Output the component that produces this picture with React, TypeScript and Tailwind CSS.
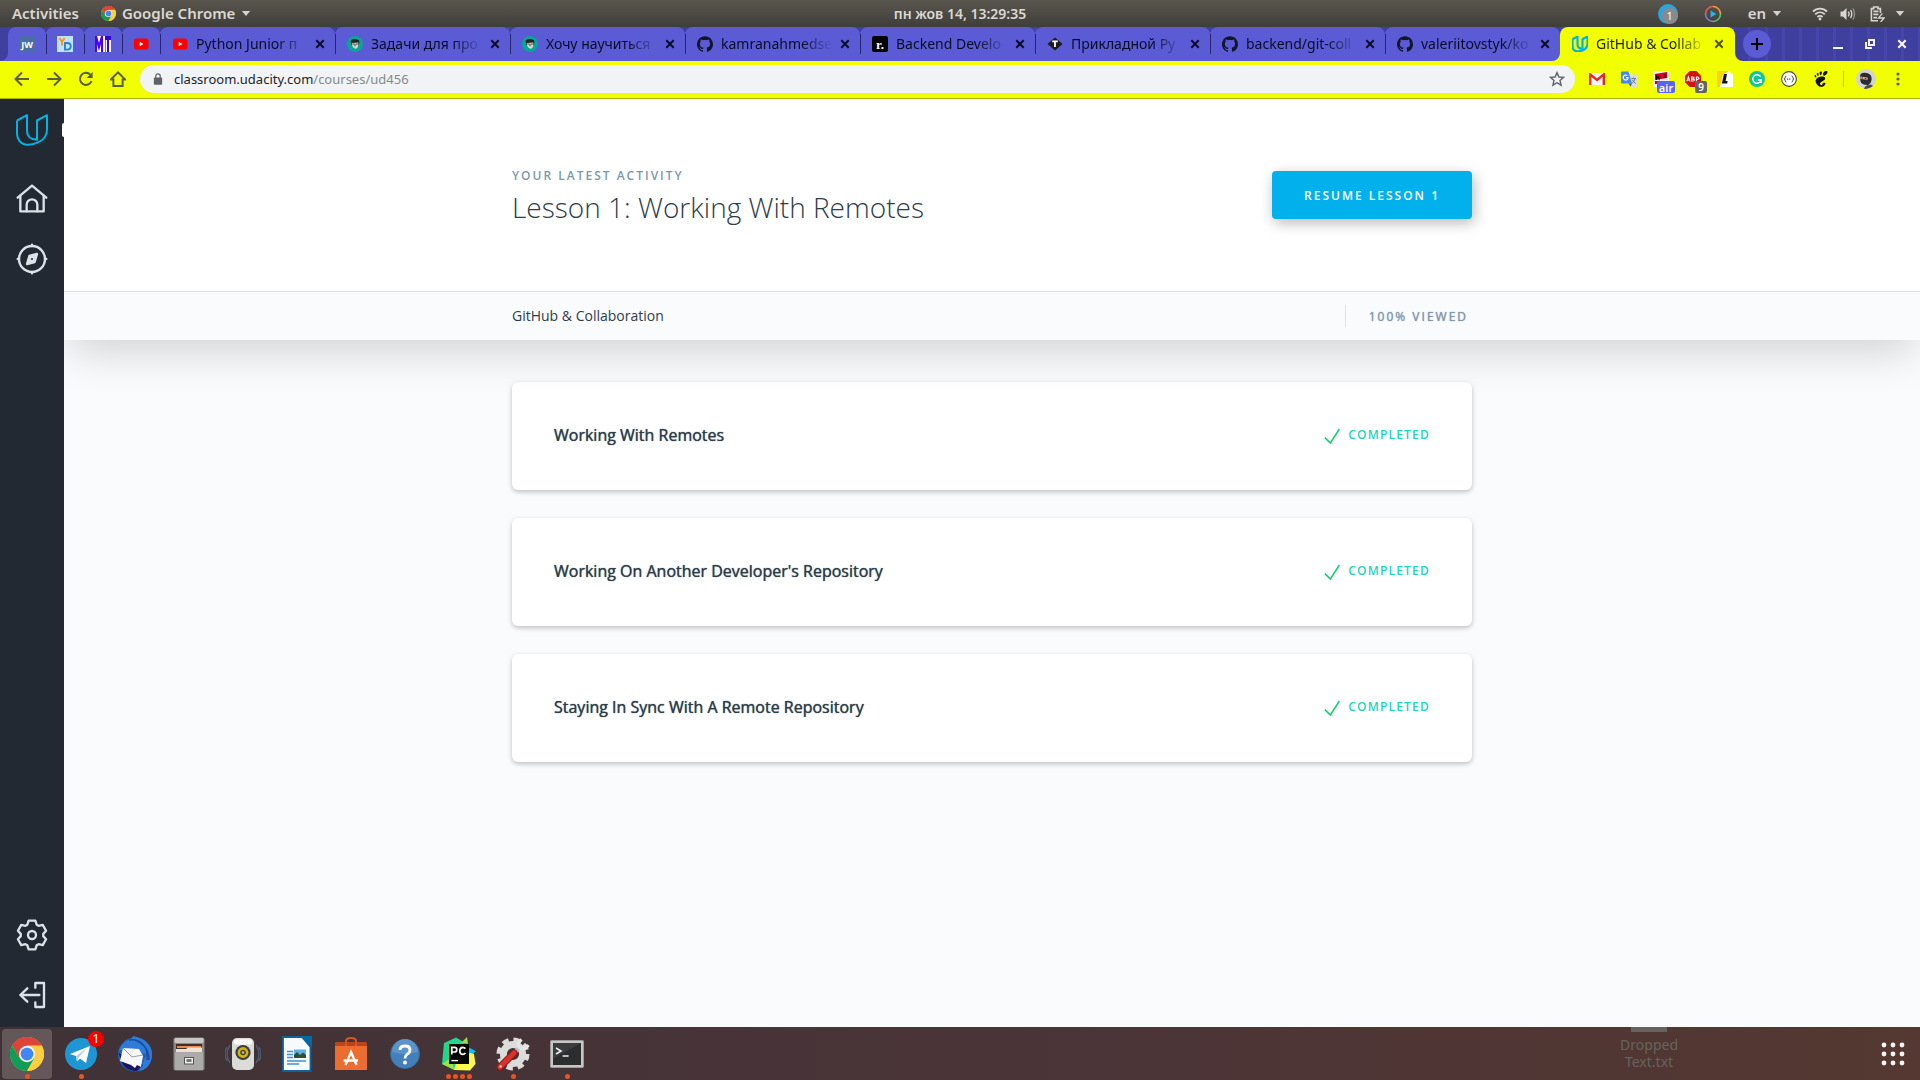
import type { ReactNode } from "react";
import { SiGithub, SiGnome } from "react-icons/si";

const UI = "font-['Noto_Sans',sans-serif]";

function ChromeLogo({ className }: { className: string }) {
  return (
    <svg viewBox="0 0 48 48" className={className} aria-hidden="true">
      <circle cx="24" cy="24" r="24" fill="#ffcd40" />
      <path d="M24 24 L3.2 12 A24 24 0 0 1 44.8 12 Z" fill="#db4437" />
      <path d="M24 12 H44.8 A24 24 0 0 0 3.2 12 L13.6 30 Z" fill="#db4437" />
      <path d="M3.2 12 A24 24 0 0 0 24 48 L34.4 30 H13.6 Z" fill="#0f9d58" />
      <path d="M24 48 A24 24 0 0 0 44.8 12 H24 L34.4 30 Z" fill="#ffcd40" />
      <circle cx="24" cy="24" r="11.5" fill="#f1f1f1" />
      <circle cx="24" cy="24" r="9" fill="#4285f4" />
    </svg>
  );
}

function UdacityMark({ className, stroke, width }: { className: string; stroke: string; width: number }) {
  return (
    <svg viewBox="47 74 96 95" className={className} fill="none" stroke={stroke} strokeWidth={width} strokeLinejoin="round" aria-hidden="true">
      <path d="M50 93 L80 77 V122 C80 141 92 150 108 150" />
      <path d="M50 93 V130 C50 153 64 166 84 166 C118 162 140 146 140 120 V77 L110 93 V154" />
    </svg>
  );
}

function Youtube() {
  return (
    <svg viewBox="0 0 16 16" className="size-4" aria-hidden="true">
      <rect x="1" y="2.5" width="14.5" height="11" rx="2.5" fill="#f00" />
      <path d="M6.7 5.8 L10.4 8 L6.7 10.2 Z" fill="#fff" />
    </svg>
  );
}

function FaceIcon() {
  return (
    <svg viewBox="0 0 16 16" className="size-4" aria-hidden="true">
      <circle cx="8" cy="8" r="8" fill="#06a79b" />
      <path d="M3.6 5 C4.5 2.6 10.5 2.4 12 4.6 C12.8 7 12 8 12 9 H4.4 Z" fill="#232323" />
      <path d="M4.8 7 L11.4 6.6 C11.6 10.5 10.6 12.6 8.8 12.8 C6.4 12.6 5 10.6 4.8 7 Z" fill="#d8d2cc" />
      <path d="M5.4 8 H7.4 M8.8 8 H10.8 M8 8 V10.2" stroke="#333" strokeWidth="0.9" />
    </svg>
  );
}

function JwIcon() {
  return <span className="flex size-4 items-center justify-center bg-[#4a6da7] font-['Open_Sans',sans-serif] text-[9px] font-bold leading-none text-white">JW</span>;
}

function YdIcon() {
  return (
    <svg viewBox="0 0 16 16" className="size-4" aria-hidden="true">
      <rect width="16" height="16" fill="#bfe3fa" />
      <path d="M2.5 2 L5 6 L7.6 2 M5 6 V9.4" stroke="#f59a16" strokeWidth="2" fill="none" />
      <path d="M8 7 H10 C15 7 15 13.6 10 13.6 H8 Z" stroke="#2a7fd0" strokeWidth="1.9" fill="none" />
    </svg>
  );
}

function StripesIcon() {
  return (
    <svg viewBox="0 0 16 16" className="size-4" aria-hidden="true">
      <rect width="16" height="16" fill="#fff" />
      <path d="M0 0 H2 L4 7 L6 0 H8 V16 H6 V8 L4 15 L2 8 V16 H0 Z" fill="#4a00ff" />
      <path d="M8 0 H16 V4 H14 V16 H12 V4 H10.6 V16 H10 V0 Z" fill="#3a00e0" />
      <path d="M8.6 0 H10 V16 H8.6 Z" fill="#fff" />
    </svg>
  );
}

function RoadmapIcon() {
  return <span className="flex size-4 items-center justify-center rounded-xs bg-black font-['Liberation_Serif',serif] text-[13px] font-bold leading-none text-white">r.</span>;
}

function DiamondIcon() {
  return (
    <svg viewBox="0 0 16 16" className="size-4" aria-hidden="true">
      <path d="M8 1.5 L15.5 8 L8 14.5 L0.5 8 Z" fill="#1c1c1c" />
      <path d="M5.2 5.4 H10.8 M8 5 V11" stroke="#fff" strokeWidth="1.8" />
    </svg>
  );
}

function Github() {
  return <SiGithub className="size-4 text-[#14142c]" aria-hidden="true" />;
}

function Cross({ className, width = 2 }: { className: string; width?: number }) {
  return (
    <svg viewBox="0 0 10 10" className={className} fill="none" stroke="currentColor" strokeWidth={width} aria-hidden="true">
      <path d="M1.3 1.3 L8.7 8.7 M8.7 1.3 L1.3 8.7" />
    </svg>
  );
}

function Caret() {
  return (
    <svg viewBox="0 0 10 6" className="h-[5px] w-[10px]" aria-hidden="true">
      <path d="M0 0 H10 L5 6 Z" fill="#d3d1cd" />
    </svg>
  );
}

const pinned: { label: string; icon: ReactNode }[] = [
  { label: "JW", icon: <JwIcon /> },
  { label: "YD", icon: <YdIcon /> },
  { label: "MIT", icon: <StripesIcon /> },
  { label: "YouTube", icon: <Youtube /> },
];

const tabs: { title: string; icon: ReactNode }[] = [
  { title: "Python Junior п", icon: <Youtube /> },
  { title: "Задачи для про", icon: <FaceIcon /> },
  { title: "Хочу научиться", icon: <FaceIcon /> },
  { title: "kamranahmedse", icon: <Github /> },
  { title: "Backend Develo", icon: <RoadmapIcon /> },
  { title: "Прикладной Py", icon: <DiamondIcon /> },
  { title: "backend/git-coll", icon: <Github /> },
  { title: "valeriitovstyk/ko", icon: <Github /> },
];

function SystemBar() {
  return (
    <header className={`${UI} grid h-[27px] shrink-0 grid-cols-[1fr_auto_1fr] items-center bg-linear-to-b from-[#59564e] to-[#403e3a] text-[15px] font-semibold leading-none text-[#dbd8d2]`}>
      <div className="flex items-center pl-3">
        <button type="button" className="mr-[22px]">Activities</button>
        <button type="button" className="flex items-center gap-1.5">
          <ChromeLogo className="size-[15px]" />
          <span>Google Chrome</span>
          <Caret />
        </button>
      </div>
      <time className="text-sm leading-none">пн жов 14, 13:29:35</time>
      <div className="flex items-center justify-end pr-[15px]">
        <span className="relative mr-[26px] size-5 rounded-full bg-[#2ea3dd]">
          <span className="absolute bottom-0 right-0 flex size-4 items-center justify-center rounded-full bg-[#888b8e] text-[11px] font-normal text-white">1</span>
        </span>
        <svg viewBox="0 0 18 18" className="mr-[26px] size-[18px]" fill="none" strokeWidth="1.6" aria-hidden="true">
          <path d="M1.5 9 A7.5 7.5 0 0 1 9 1.5" stroke="#e0604e" />
          <path d="M9 1.5 A7.5 7.5 0 0 1 16.5 9" stroke="#e8a13c" />
          <path d="M16.5 9 A7.5 7.5 0 0 1 9 16.5" stroke="#5fbf72" />
          <path d="M9 16.5 A7.5 7.5 0 0 1 1.5 9" stroke="#8a78d8" />
          <path d="M6.6 5.4 L12.4 9 L6.6 12.6 Z" fill="#25b4ee" />
        </svg>
        <button type="button" className="mr-[30px] flex items-center gap-1.5">en <Caret /></button>
        <svg viewBox="0 0 16 14" className="mr-3 h-[14px] w-4" fill="none" stroke="#d8d6d1" strokeWidth="1.8" aria-hidden="true">
          <path d="M1 4.6 C5 0.6 11 0.6 15 4.6" />
          <path d="M3.2 7.4 C6 4.8 10 4.8 12.8 7.4" />
          <path d="M5.4 10 C7 8.6 9 8.6 10.6 10" />
          <circle cx="8" cy="12" r="1.4" fill="#d8d6d1" stroke="none" />
        </svg>
        <svg viewBox="0 0 16 14" className="mr-[14px] h-[14px] w-4" fill="none" stroke="#d8d6d1" strokeWidth="1.4" aria-hidden="true">
          <path d="M0.5 4.5 H3 L6.5 1 V13 L3 9.5 H0.5 Z" fill="#d8d6d1" stroke="none" />
          <path d="M8.4 4.6 Q10 7 8.4 9.4 M10.6 3 Q13 7 10.6 11" />
          <path d="M12.8 1.4 Q16.4 7 12.8 12.6" stroke="#8d8b86" />
        </svg>
        <svg viewBox="0 0 15 16" className="mr-[10px] h-4 w-[15px]" fill="none" stroke="#d8d6d1" strokeWidth="1.6" aria-hidden="true">
          <path d="M8 14.8 H1.4 V2.6 H3.6 V1 H8 V2.6 H10.4 V7" />
          <path d="M3.4 5.4 H8.4 M3.4 8.4 H8.4 M3.4 11.6 H7" />
          <path d="M12.4 7.4 L8.4 12 H14.2 L10.6 16" strokeWidth="1.3" />
        </svg>
        <Caret />
      </div>
    </header>
  );
}

function Flare({ className }: { className: string }) {
  return (
    <svg viewBox="0 0 8 8" className={className} aria-hidden="true">
      <path d="M8 0 V8 H0 A8 8 0 0 0 8 0 Z" fill="currentColor" />
    </svg>
  );
}

function TabTitle({ children }: { children: ReactNode }) {
  return (
    <span className="min-w-0 flex-1 overflow-hidden whitespace-nowrap text-left text-sm leading-5 [mask-image:linear-gradient(to_right,black_72%,transparent)]">
      {children}
    </span>
  );
}

function TabStrip() {
  return (
    <nav aria-label="Tabs" className={`${UI} flex h-[34px] shrink-0 bg-[#3f3fa0] bg-[repeating-linear-gradient(90deg,transparent_0px,transparent_14px,#4545aa_14px,#4545aa_17px)] pl-2 text-[#0c0c28]`}>
      {pinned.map((t, i) => (
        <div key={t.label} className="relative flex w-[38px] shrink-0 items-center">
          {i === 0 && <Flare className="absolute -left-2 bottom-0 size-2 text-[#5a5bd5]" />}
          <button type="button" aria-label={t.label} className="flex h-full w-full items-center justify-center rounded-t-lg bg-[#5a5bd5]">
            {t.icon}
          </button>
          <span className="absolute -right-px z-10 h-5 w-px bg-[#26266e]" />
        </div>
      ))}
      {tabs.map((t, i) => (
        <div key={t.title} className="relative flex min-w-0 max-w-[175px] flex-1 items-center rounded-t-lg bg-[#5a5bd5] pl-3 pr-[7px]">
          <button type="button" className="flex min-w-0 flex-1 items-center gap-2">
            <span className="shrink-0">{t.icon}</span>
            <TabTitle>{t.title}</TabTitle>
          </button>
          <button type="button" aria-label={`Close ${t.title}`} className="ml-1 flex size-4 shrink-0 items-center justify-center">
            <Cross className="size-[10px]" />
          </button>
          {i < tabs.length - 1 && <span className="absolute -right-px z-10 h-5 w-px bg-[#26266e]" />}
        </div>
      ))}
      <div className="relative flex min-w-0 max-w-[175px] flex-1 items-center rounded-t-lg bg-[#f1ff00] pl-3 pr-2 text-[#222200]">
        <Flare className="absolute -left-2 bottom-0 size-2 text-[#f1ff00]" />
        <Flare className="absolute -right-2 bottom-0 size-2 -scale-x-100 text-[#f1ff00]" />
        <button type="button" aria-current="page" className="flex min-w-0 flex-1 items-center gap-2">
          <UdacityMark className="size-4 shrink-0" stroke="#02b3e4" width={13} />
          <TabTitle>GitHub &amp; Collab</TabTitle>
        </button>
        <button type="button" aria-label="Close GitHub &amp; Collaboration" className="ml-1 flex size-4 shrink-0 items-center justify-center text-[#4d5200]">
          <Cross className="size-[10px]" />
        </button>
      </div>
      <div className="flex flex-1 items-center justify-between pl-2 pr-[13px] text-[#f4f4fa]">
        <button type="button" aria-label="New tab" className="flex size-7 items-center justify-center rounded-full bg-[#5a5bd5] text-black">
          <svg viewBox="0 0 12 12" className="size-3" stroke="currentColor" strokeWidth="2" aria-hidden="true">
            <path d="M6 0 V12 M0 6 H12" />
          </svg>
        </button>
        <div className="flex items-center gap-[22px]">
          <button type="button" aria-label="Minimize" className="flex h-[10px] w-[10px] items-end">
            <span className="h-0.5 w-full bg-current" />
          </button>
          <button type="button" aria-label="Restore">
            <svg viewBox="0 0 10 10" className="size-[10px]" fill="none" stroke="currentColor" strokeWidth="2" aria-hidden="true">
              <path d="M4 1 H9 V6 H4 Z M1 3 V9 H7" />
            </svg>
          </button>
          <button type="button" aria-label="Close window">
            <Cross className="size-[10px]" width={2.2} />
          </button>
        </div>
      </div>
    </nav>
  );
}

function ToolButton({ label, children }: { label: string; children: ReactNode }) {
  return (
    <button type="button" aria-label={label} className="flex size-8 shrink-0 items-center justify-center">
      {children}
    </button>
  );
}

function Toolbar() {
  return (
    <div className={`${UI} flex h-[38px] shrink-0 items-center border-b border-[#a9b200] bg-[#f1ff00] px-1.5 pb-px text-[#5a5e3e]`}>
      <ToolButton label="Back">
        <svg viewBox="0 0 16 16" className="size-4" fill="none" stroke="currentColor" strokeWidth="2" aria-hidden="true"><path d="M15 8 H2 M8 1.5 L1.5 8 L8 14.5" /></svg>
      </ToolButton>
      <ToolButton label="Forward">
        <svg viewBox="0 0 16 16" className="size-4" fill="none" stroke="currentColor" strokeWidth="2" aria-hidden="true"><path d="M1 8 H14 M8 1.5 L14.5 8 L8 14.5" /></svg>
      </ToolButton>
      <ToolButton label="Reload">
        <svg viewBox="0 0 16 16" className="size-4" fill="none" stroke="currentColor" strokeWidth="2" aria-hidden="true">
          <path d="M13.6 10 A6 6 0 1 1 12.4 3.8" />
          <path d="M14.6 1 V7 H8.6 Z" fill="currentColor" stroke="none" />
        </svg>
      </ToolButton>
      <ToolButton label="Home">
        <svg viewBox="0 0 16 16" className="size-4" fill="none" stroke="currentColor" strokeWidth="2" aria-hidden="true"><path d="M0.8 8.6 H3.4 V15 H12.6 V8.6 H15.2 L8 1.4 Z" /></svg>
      </ToolButton>
      <div className="mx-1.5 flex h-7 min-w-0 flex-1 items-center rounded-full bg-[#f1f3f4] pl-[13px] pr-[10px] text-[#5f6368]">
        <svg viewBox="0 0 10 13" className="mr-[11px] h-[12px] w-[10px]" aria-hidden="true">
          <rect x="0.5" y="5" width="9" height="7.6" rx="1" fill="currentColor" />
          <path d="M2.6 5.4 V3.4 A2.4 2.4 0 0 1 7.4 3.4 V5.4" fill="none" stroke="currentColor" strokeWidth="1.3" />
        </svg>
        <div className="flex-1 text-[13px] leading-5 text-[#85898d]" role="textbox" aria-label="Address">
          <span className="text-[#212427]">classroom.udacity.com</span>/courses/ud456
        </div>
        <button type="button" aria-label="Bookmark">
          <svg viewBox="0 0 16 16" className="size-4" fill="none" stroke="currentColor" strokeWidth="1.4" aria-hidden="true">
            <path d="M8 1.6 L9.9 6 L14.6 6.4 L11 9.5 L12.1 14.2 L8 11.7 L3.9 14.2 L5 9.5 L1.4 6.4 L6.1 6 Z" />
          </svg>
        </button>
      </div>
      <ToolButton label="Gmail">
        <svg viewBox="0 0 16 12" className="h-3 w-4" aria-hidden="true">
          <rect width="16" height="12" rx="1" fill="#f4f4f4" />
          <path d="M1.2 12 V1.4 L8 7 L14.8 1.4 V12" fill="none" stroke="#dd2c1e" strokeWidth="2.4" />
        </svg>
      </ToolButton>
      <ToolButton label="Translate">
        <svg viewBox="0 0 16 16" className="size-4" aria-hidden="true">
          <path d="M7 3.5 H15 Q16 3.5 16 4.5 V15 Q16 16 15 16 H9.5 Z" fill="#d9dce0" />
          <path d="M1 0.5 H7.4 L11 12.4 H1 Q0 12.4 0 11.4 V1.5 Q0 0.5 1 0.5 Z" fill="#4a86e8" />
          <path d="M7.4 6.6 H5 M7.2 6.6 A2.5 2.5 0 1 1 6.3 4.6" fill="none" stroke="#fff" strokeWidth="1.2" />
          <path d="M10.4 7.6 H15 M12.7 6.4 V7.6 M14.2 7.6 Q13 11 10.6 12.6 M11.2 8.8 L14.6 12.6" stroke="#73787d" fill="none" />
          <path d="M7.6 12.4 H11 L9.4 15.6 Z" fill="#3458b4" />
        </svg>
      </ToolButton>
      <ToolButton label="NRJ air">
        <span className="relative size-4">
          <svg viewBox="0 0 16 16" className="size-4" aria-hidden="true">
            <rect width="16" height="16" fill="#f7eeee" />
            <path d="M2 3 L14 1 V7 L2 9 Z M2 10 H8 L6 13 H2 Z" fill="#d2001e" />
            <path d="M3.6 9 V5 L6 8 V4.4 M12 3 V7" stroke="#2a0008" strokeWidth="1.2" fill="none" />
          </svg>
          <span className="absolute -bottom-1.5 left-1 flex h-3 w-[18px] items-center justify-center rounded-xs bg-[#5b63f5] text-[11px] font-semibold leading-none text-white">air</span>
        </span>
      </ToolButton>
      <ToolButton label="Adblock Plus">
        <span className="relative flex size-4 items-center justify-center">
          <svg viewBox="0 0 16 16" className="size-4" aria-hidden="true">
            <path d="M4.7 0 H11.3 L16 4.7 V11.3 L11.3 16 H4.7 L0 11.3 V4.7 Z" fill="#d3120e" />
            <path d="M1.8 10.4 L3.4 5.8 L5 10.4 M2.3 9 H4.5 M6.7 10.2 V6 H8 Q9.2 6.2 8.9 7.1 Q8.7 8 7 8 Q9.6 8 9.4 9.2 Q9.2 10.2 6.7 10.2 M11.4 10.6 V6 H12.6 Q14 6.2 14 7.3 Q13.9 8.6 11.4 8.6" fill="none" stroke="#fff" strokeWidth="1.1" />
          </svg>
          <span className="absolute -bottom-1.5 left-[10px] flex size-3 items-center justify-center rounded-xs bg-[#646464] text-[10px] font-semibold leading-none text-white">9</span>
        </span>
      </ToolButton>
      <ToolButton label="Lingualeo">
        <svg viewBox="0 0 16 16" className="size-4" aria-hidden="true">
          <path d="M0 0 H12 L16 4 V16 H0 Z" fill="#fff" />
          <path d="M0 0 H12 L6 4 L3 16 H0 Z" fill="#ffd400" />
          <path d="M7 3 H10 L8.6 10 H10.6 L10.2 12.4 H4.8 Z" fill="#111" />
        </svg>
      </ToolButton>
      <ToolButton label="Grammarly">
        <svg viewBox="0 0 16 16" className="size-4" fill="none" aria-hidden="true">
          <circle cx="8" cy="8" r="8" fill="#15c39a" />
          <path d="M11.6 5.6 A4.3 4.3 0 1 0 12.2 9 H8.8 M12 8.6 V12" stroke="#fff" strokeWidth="1.4" />
        </svg>
      </ToolButton>
      <ToolButton label="JSON viewer">
        <svg viewBox="0 0 16 16" className="size-4" fill="none" stroke="#444" aria-hidden="true">
          <circle cx="8" cy="8" r="7.4" fill="#fff" strokeWidth="1.1" />
          <path d="M5.4 5 Q4.2 5 4.2 6.4 Q4.2 8 3 8 Q4.2 8 4.2 9.6 Q4.2 11 5.4 11 M10.6 5 Q11.8 5 11.8 6.4 Q11.8 8 13 8 Q11.8 8 11.8 9.6 Q11.8 11 10.6 11" />
          <path d="M6 8.2 H10" strokeDasharray="1 0.8" strokeWidth="1.2" />
        </svg>
      </ToolButton>
      <ToolButton label="GNOME Shell integration">
        <SiGnome className="size-4 text-[#111]" aria-hidden="true" />
      </ToolButton>
      <span className="mx-1.5 h-4 w-px bg-[#bdc600]" />
      <ToolButton label="Profile">
        <svg viewBox="0 0 20 20" className="size-5" aria-hidden="true">
          <circle cx="10" cy="10" r="10" fill="#d3d3cf" />
          <path d="M4 7 Q4.5 3.5 9 3.8 Q15 4 15.6 9 Q16 14 12 16 Q5 16 4.4 12 Z" fill="#2b2c31" />
          <path d="M4.2 7.6 L11.6 8.4 V10.8 L4.6 10 Z" fill="#e0b58e" />
          <path d="M5.6 9 H7 M8.8 9.4 H10.2" stroke="#222" />
          <path d="M8 19.8 Q9 15.6 15 15.4 L17 17 Q13 20.4 8 19.8 Z" fill="#4b4c52" />
        </svg>
      </ToolButton>
      <ToolButton label="Menu">
        <svg viewBox="0 0 4 14" className="h-[14px] w-1" fill="currentColor" aria-hidden="true">
          <circle cx="2" cy="2" r="1.6" /><circle cx="2" cy="7" r="1.6" /><circle cx="2" cy="12" r="1.6" />
        </svg>
      </ToolButton>
    </div>
  );
}

const gearPoints = Array.from({ length: 6 }, (_, i) => {
  const a = (i * Math.PI) / 3;
  return [[-14, -31], [-10, -43], [10, -43], [14, -31]]
    .map(([x, y]) => `${(x * Math.cos(a) - y * Math.sin(a)).toFixed(1)},${(x * Math.sin(a) + y * Math.cos(a)).toFixed(1)}`)
    .join(" ");
}).join(" ");

function SideLink({ label, children }: { label: string; children: ReactNode }) {
  return (
    <a href="#" aria-label={label} className="flex h-[60px] items-center justify-center">
      <svg viewBox="-48 -48 96 96" className="size-8" fill="none" stroke="#dbe2e8" strokeWidth="7" strokeLinejoin="round" strokeLinecap="round" aria-hidden="true">
        {children}
      </svg>
    </a>
  );
}

function Sidebar() {
  return (
    <aside className="relative flex w-16 shrink-0 flex-col bg-[#222933] pb-0.5">
      <a href="#" aria-label="Udacity" className="mb-2 flex h-[62px] items-center justify-center">
        <UdacityMark className="size-8" stroke="#02b3e4" width={6} />
      </a>
      <span className="absolute right-0 top-6 h-[14px] w-0.5 rounded-l-sm bg-white" />
      <SideLink label="Home">
        <path d="M-43 -4 L0 -40 L43 -4" />
        <path d="M-35 -10 V37 H35 V-10" />
        <path d="M-16 37 V17 A16 16 0 0 1 16 17 V37" />
      </SideLink>
      <SideLink label="Catalog">
        <circle r="39" />
        <path d="M0 -43 V-39 M0 43 V39 M-43 0 H-39 M43 0 H39" />
        <path d="M-15 15 L-8 -9 L15 -15 L8 9 Z" fill="#dbe2e8" />
        <circle r="3" fill="#222933" stroke="none" />
      </SideLink>
      <div className="flex-1" />
      <SideLink label="Settings">
        <polygon points={gearPoints} />
        <circle r="12" />
      </SideLink>
      <SideLink label="Log out">
        <path d="M10 -22 V-36 H36 V36 H10 V22" />
        <path d="M22 0 H-35 M-14 -20 L-35 0 L-14 20" />
      </SideLink>
    </aside>
  );
}

const lessons = ["Working With Remotes", "Working On Another Developer's Repository", "Staying In Sync With A Remote Repository"];

function Classroom() {
  return (
    <main className="min-w-0 flex-1 overflow-hidden bg-[#fafbfd] font-['Open_Sans',sans-serif] text-[#2e3d49]">
      <section className="relative shadow-[0_18px_40px_-6px_rgba(0,0,0,0.16)]">
        <div className="border-b border-[#dbe2e8] bg-white px-6 pb-[65px] pt-[67px]">
          <div className="mx-auto flex max-w-[960px] items-start justify-between">
            <div>
              <p className="text-xs font-semibold uppercase leading-5 tracking-[2px] text-[#7d97ad]">Your latest activity</p>
              <h1 className="mt-0.5 text-[28px] font-light leading-[38px]">Lesson 1: Working With Remotes</h1>
            </div>
            <button type="button" className="mt-[5px] h-12 rounded-sm bg-[#02b0ec] px-8 pt-px text-xs font-semibold uppercase tracking-[2px] text-white shadow-[2px_4px_14px_rgba(0,0,0,0.28)]">
              Resume Lesson 1
            </button>
          </div>
        </div>
        <div className="bg-[#fafbfd] px-6">
          <div className="mx-auto flex h-12 max-w-[960px] items-center justify-between">
            <a href="#" className="text-sm">GitHub &amp; Collaboration</a>
            <span className="flex h-[22px] items-center border-l border-[#dbe2e8] pl-[23px] pr-1 pt-px text-xs uppercase tracking-[2px] text-[#7d97ad] [text-shadow:0_0_1px_currentColor]">100% viewed</span>
          </div>
        </div>
      </section>
      <ul className="mx-auto mt-[42px] flex max-w-[960px] flex-col gap-7">
        {lessons.map((l) => (
          <li key={l}>
            <a href="#" className="flex h-[108px] items-center justify-between rounded-md bg-white px-[42px] pb-0.5 shadow-[0_2px_5px_rgba(0,0,0,0.24)]">
              <span className="text-base [text-shadow:0_0_1px_currentColor]">{l}</span>
              <span className="flex items-center gap-2 text-xs font-semibold uppercase tracking-widest text-[#1ad6c0]">
                <svg viewBox="0 0 16 16" className="mt-0.5 size-4" fill="none" stroke="#15cf74" strokeWidth="1.6" aria-hidden="true">
                  <path d="M0.8 9.6 L6.4 15 L15.4 1" />
                </svg>
                Completed
              </span>
            </a>
          </li>
        ))}
      </ul>
    </main>
  );
}

const dock: { label: string; icon: ReactNode; dots: number; badge?: string }[] = [
  { label: "Google Chrome", dots: 1, icon: <ChromeLogo className="size-[34px]" /> },
  {
    label: "Telegram", dots: 1, badge: "1",
    icon: (
      <svg viewBox="0 0 32 32" className="size-8" aria-hidden="true">
        <circle cx="16" cy="16" r="16" fill="#1f96d4" />
        <path d="M5 16 L25 8 L21 25 L15 20.6 L12 23.5 L11 18 Z" fill="#fff" />
        <path d="M11 18 L22 10.6 L14 19 L12 23.5 Z" fill="#b5cfe4" />
      </svg>
    ),
  },
  {
    label: "Thunderbird", dots: 0,
    icon: (
      <svg viewBox="0 0 36 36" className="size-9" aria-hidden="true">
        <circle cx="18" cy="18.5" r="17" fill="#2361b8" />
        <path d="M2 14 C8 2 14 6 16 0 C28 2 36 10 35 20 C34 30 28 34 22 35 L30 18 Z" fill="#2f7bd8" />
        <path d="M12 4 C22 2 32 10 30 24 M18 4 C28 8 32 14 32 24" stroke="#1b4d9c" strokeWidth="1.5" fill="none" />
        <path d="M1.5 17 L5 27 C8 33 14 35 20 35 L26 29 Z" fill="#1b1660" />
        <path d="M6 12 L22 13 L26 20 L24 31 L20 29 L18 32 L14 29 L3 25 Z" fill="#f7f7fa" />
        <path d="M6 12 L15 21 L26 19" stroke="#9aa1ad" fill="none" />
      </svg>
    ),
  },
  {
    label: "Files", dots: 0,
    icon: (
      <svg viewBox="0 0 32 34" className="h-[34px] w-8" aria-hidden="true">
        <rect x="0.5" y="0.5" width="31" height="33" rx="2" fill="#8c8a88" />
        <rect x="1.5" y="1" width="29" height="5" rx="1.5" fill="#c9c7c4" />
        <rect x="3" y="7" width="26" height="8" fill="#3a3230" />
        <path d="M4 9 H28 V11 H4 Z" fill="#f08a48" />
        <path d="M3 12 H13 L15 10.6 H29 V15 H3 Z" fill="#efe0d4" />
        <rect x="2" y="15" width="28" height="18" rx="1" fill="#adabaa" />
        <rect x="11.5" y="20.5" width="9" height="6.5" fill="#eee" stroke="#555" />
        <path d="M13.5 22 H18.5 V25 H13.5 Z" fill="#777" />
      </svg>
    ),
  },
  {
    label: "Rhythmbox", dots: 0,
    icon: (
      <svg viewBox="0 0 36 34" className="h-[34px] w-9" aria-hidden="true">
        <path d="M5 8 Q-1 17 5 26 M31 8 Q37 17 31 26 M2 10 Q-2 17 2 24 M34 10 Q38 17 34 24" stroke="#4d5970" strokeWidth="1.4" fill="none" />
        <rect x="7" y="1" width="22" height="32" rx="5" fill="#dcdcd6" />
        <rect x="9" y="2.5" width="18" height="5" rx="2.5" fill="#fff" />
        <circle cx="18" cy="15.5" r="7.6" fill="#3b3d40" />
        <circle cx="18" cy="15.5" r="5.4" fill="#d3b50c" />
        <circle cx="18" cy="15.5" r="2.8" fill="#4b4620" />
        <circle cx="18" cy="15.5" r="1.3" fill="#bbb" />
      </svg>
    ),
  },
  {
    label: "LibreOffice Writer", dots: 0,
    icon: (
      <svg viewBox="0 0 30 36" className="h-9 w-[30px]" aria-hidden="true">
        <path d="M1 1 H20 L28.5 11 V35 H1 Z" fill="#f7fafc" stroke="#0e639c" strokeWidth="1.8" />
        <path d="M19 0 H30 V11 Z" fill="#0369a3" />
        <path d="M5 15.5 H11 M5 18.5 H11 M5 21.5 H11 M5 25 H24 M5 28 H17" stroke="#3c94c8" strokeWidth="1.6" />
        <rect x="12" y="13.5" width="12" height="8.5" fill="#5fb1e8" />
        <path d="M12 22 V19 L15 16 L18 19 L21 16.5 L24 19 V22 Z" fill="#33502c" />
      </svg>
    ),
  },
  {
    label: "Ubuntu Software", dots: 0,
    icon: (
      <svg viewBox="0 0 32 34" className="h-[34px] w-8" aria-hidden="true">
        <path d="M0 6 L3 5 H29 L32 6 V33 H0 Z" fill="#ed6c30" />
        <path d="M0 6 L3 5 H29 L32 6 V9 H0 Z" fill="#b8461a" />
        <path d="M11 9 V4 Q11 1 16 1 Q21 1 21 4 V9" fill="none" stroke="#d7552a" strokeWidth="2" />
        <path d="M10.5 28 L16 15 L21.5 28 M8.5 23.5 H23" fill="none" stroke="#fff" strokeWidth="2.4" />
      </svg>
    ),
  },
  {
    label: "Help", dots: 0,
    icon: (
      <svg viewBox="0 0 30 30" className="size-[30px]" aria-hidden="true">
        <circle cx="15" cy="15" r="14.6" fill="#447fb9" stroke="#35689c" strokeWidth="0.8" />
        <path d="M2 13 A13 13 0 0 1 28 13 Q15 17 2 13 Z" fill="#5b93ca" />
        <path d="M10 11 Q10 7 15 7 Q20 7 20 11 Q20 13.6 17 15.4 Q15 16.8 15 19.4" fill="none" stroke="#fff" strokeWidth="2.8" />
        <circle cx="15" cy="23.6" r="2" fill="#fff" />
      </svg>
    ),
  },
  {
    label: "PyCharm", dots: 4,
    icon: (
      <svg viewBox="0 0 34 34" className="size-[34px]" aria-hidden="true">
        <path d="M2 6 L14 0.5 L20 4 L26 14 L14 33 L0 27 Z" fill="#21d789" />
        <path d="M19 6 L25 0 L26 7 Z M0 27 L10 20 L12 33 Z" fill="#9be04e" />
        <path d="M26 10 L33.5 14 L28 21 Z" fill="#07c3f2" />
        <path d="M28 16 L32 17 L33.5 27 L28 33.5 L12 33 L14 26 Z" fill="#fcf84a" />
        <rect x="7" y="7" width="20" height="20" fill="#060606" />
        <path d="M9.8 17.5 V10.4 H12.4 Q14.8 10.4 14.8 12.7 Q14.8 15 12.4 15 H10 M23.4 11.6 Q22.4 10.4 20.8 10.4 Q17.8 10.6 17.8 13.9 Q17.8 17.2 20.8 17.3 Q22.4 17.3 23.5 16" stroke="#fff" strokeWidth="1.7" fill="none" />
        <path d="M9.4 23.6 H16" stroke="#fff" strokeWidth="1.4" />
      </svg>
    ),
  },
  {
    label: "System tools", dots: 1,
    icon: (
      <svg viewBox="0 0 34 34" className="size-[34px]" aria-hidden="true">
        <circle cx="17" cy="17" r="14" fill="none" stroke="#dcdcda" strokeWidth="5" strokeDasharray="6.2 4.8" />
        <circle cx="17" cy="17" r="9.6" fill="none" stroke="#dcdcda" strokeWidth="7" />
        <path d="M19 15 L25 9" stroke="#b9bcbe" strokeWidth="4" />
        <path d="M25.6 2.5 Q21 6 23.4 10.4 Q28 13.6 32.4 8" fill="none" stroke="#e4e6e8" strokeWidth="3.4" />
        <path d="M4 30 L18 16" stroke="#8f1512" strokeWidth="7" strokeLinecap="round" />
        <path d="M4 30 L18 16" stroke="#d8322c" strokeWidth="5" strokeLinecap="round" />
        <circle cx="4.6" cy="29.4" r="1.2" fill="#f5d8d8" />
      </svg>
    ),
  },
  {
    label: "Terminal", dots: 1,
    icon: (
      <svg viewBox="0 0 34 28" className="h-7 w-[34px]" aria-hidden="true">
        <rect x="0.5" y="0.5" width="33" height="27" rx="1" fill="#c6c6c4" stroke="#9a9a98" />
        <rect x="3" y="3" width="28" height="22" fill="#2b2d2e" />
        <path d="M3 3 H31 L3 19 Z" fill="#3a3c3d" />
        <path d="M6 8 L11 11 L6 14 M12.6 16 H18.6" fill="none" stroke="#eee" strokeWidth="1.6" />
      </svg>
    ),
  },
];

function Dock() {
  return (
    <footer className={`${UI} flex h-[53px] shrink-0 items-center bg-linear-to-r from-[#3f3236] via-[#4a3438] to-[#543831] px-0.5`}>
      <div className="flex gap-1">
        {dock.map((d, i) => (
          <button key={d.label} type="button" aria-label={d.label} className={i === 0 ? "relative flex size-[50px] items-center justify-center rounded-sm bg-[#64575a]" : "relative flex size-[50px] items-center justify-center"}>
            {d.icon}
            {d.badge && <span className="absolute right-0.5 top-0.5 flex size-4 items-center justify-center rounded-full bg-[#f60000] text-[13px] leading-none text-white">{d.badge}</span>}
            {d.dots > 0 && (
              <span className="absolute inset-x-0 bottom-0 flex justify-center gap-0.5">
                {Array.from({ length: d.dots }, (_, n) => (
                  <span key={n} className="size-[5px] rounded-full bg-[#e95420]" />
                ))}
              </span>
            )}
          </button>
        ))}
      </div>
      <div className="ml-auto mr-[190px] flex flex-col items-center self-start text-center text-sm leading-[17px] text-[#65635c]">
        <span className="mb-1 h-[5px] w-9 bg-[#65635c]" />
        <span>Dropped</span>
        <span>Text.txt</span>
      </div>
      <button type="button" aria-label="Show applications" className="flex size-[50px] items-center justify-center">
        <svg viewBox="0 0 24 24" className="size-6" fill="#f5f5f5" aria-hidden="true">
          {[3, 12, 21].map((y) => [3, 12, 21].map((x) => <circle key={`${x}-${y}`} cx={x} cy={y} r="2.4" />))}
        </svg>
      </button>
    </footer>
  );
}

export default function App() {
  return (
    <div className="flex h-screen flex-col overflow-hidden">
      <SystemBar />
      <TabStrip />
      <Toolbar />
      <div className="flex min-h-0 flex-1">
        <Sidebar />
        <Classroom />
      </div>
      <Dock />
    </div>
  );
}
